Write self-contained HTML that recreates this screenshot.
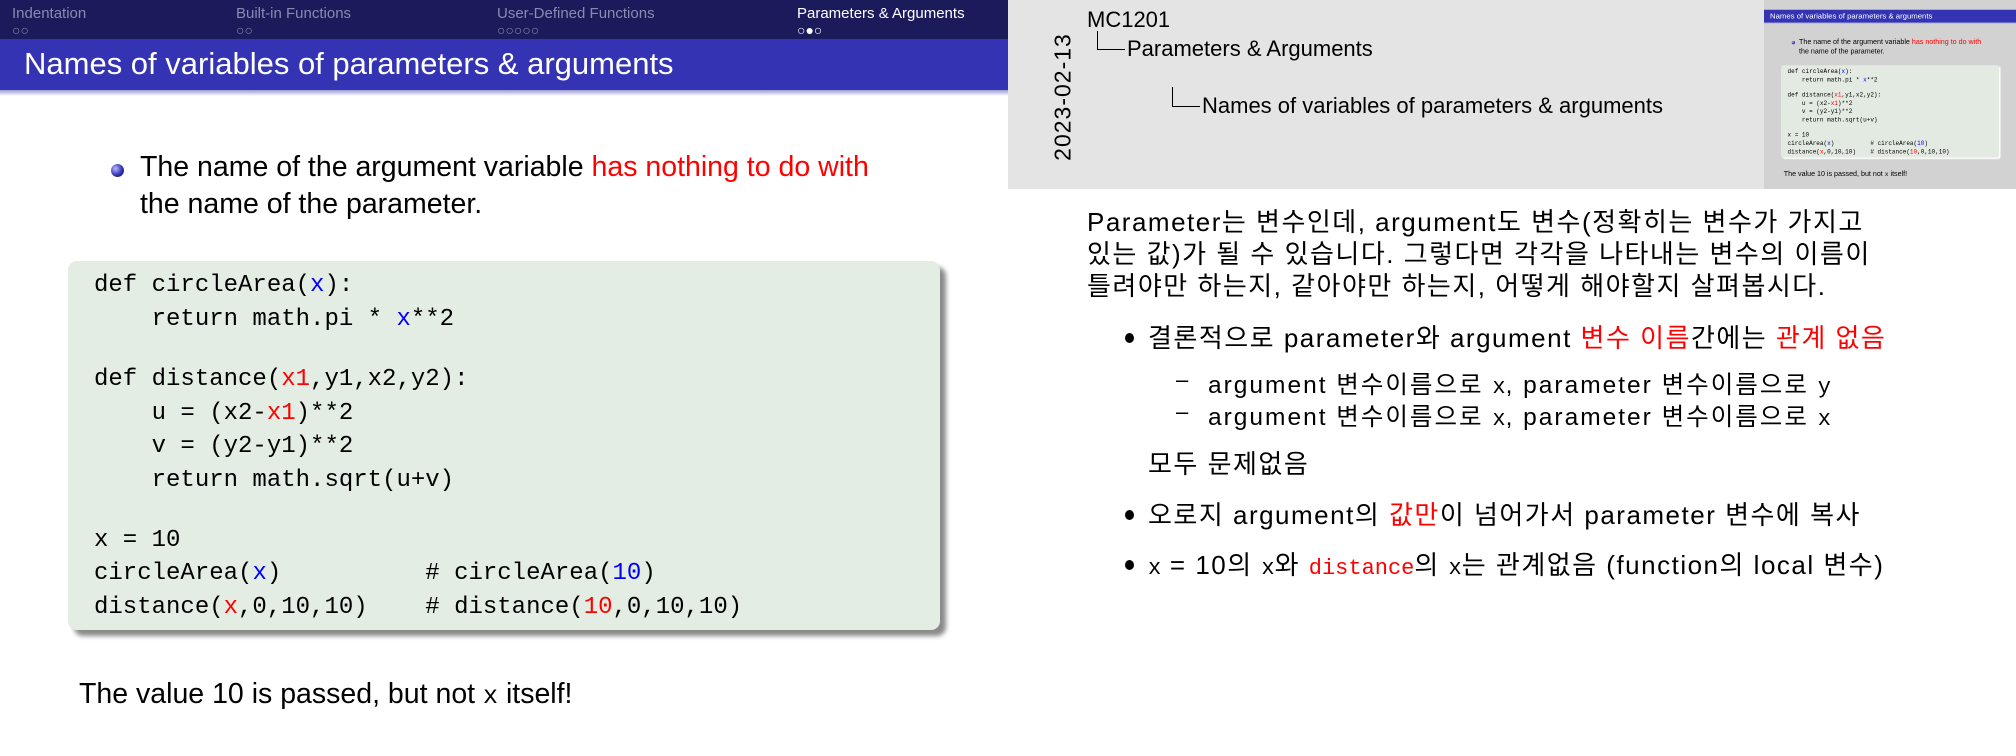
<!DOCTYPE html>
<html><head><meta charset="utf-8">
<style>
*{margin:0;padding:0;box-sizing:border-box}
body{width:2016px;height:756px;position:relative;overflow:hidden;background:#fff;font-family:"Liberation Sans","Noto Sans CJK KR",sans-serif;color:#000}
.abs{position:absolute;white-space:nowrap}
.slide{position:absolute;width:1008px;height:756px;overflow:hidden;background:#fff}
.nav{position:absolute;left:0;top:0;width:1008px;height:39px;background:#1b1b5c}
.nav .it{position:absolute;top:5px;font-size:15px;color:#8a8ab0}
.nav .it.cur{color:#fff}
.nav .dots{position:absolute;top:23px;font-size:14px;letter-spacing:0;color:#8a8ab0;line-height:14px}
.nav .dots.cur{color:#fff}
.tband{position:absolute;left:0;top:39px;width:1008px;height:51px;background:#3333b3}
.tshadow{position:absolute;left:0;top:90px;width:1008px;height:6px;background:linear-gradient(#9a9ad6,#fff)}
.title{position:absolute;left:24px;top:46px;font-size:31px;color:#fff;white-space:nowrap}
.ball{position:absolute;left:111px;top:164px;width:13px;height:13px;border-radius:50%;background:radial-gradient(circle at 35% 35%,#b8b8ff,#3333b3 55%,#101050)}
.btxt{position:absolute;left:140px;font-size:28.5px;white-space:nowrap}
.red{color:#f00}.blue{color:#00f}
.code{position:absolute;left:68px;top:261px;width:872px;height:369px;background:#e4ede4;border-radius:9px;box-shadow:6px 6px 5px #8a8a8a}
.cl{position:absolute;left:26px;font-family:"Liberation Mono",monospace;font-size:24px;white-space:pre}
.bottom{position:absolute;left:79px;top:678px;font-size:28.5px;white-space:nowrap}
.thumb{left:1764px;top:0;transform:scale(.25);transform-origin:0 0;height:756px;background:#d2d2d2}
.thumb .nav{background:#d2d2d2}.thumb .nav *{display:none}
.thumb .tshadow{background:linear-gradient(#9a9ad6,#d2d2d2)}
.thumb .code{background:#e2eae2;box-shadow:6px 6px 5px #fff}
.k{font-size:26px;letter-spacing:1.5px}
.s{font-size:24.5px;letter-spacing:2px}
.m{font-family:"Liberation Mono",monospace;font-size:22px;letter-spacing:0}
.dot{position:absolute;left:1125px;width:9px;height:10px;border-radius:50%;background:#000}
</style></head><body>

<div class="slide" style="left:0;top:0">
 <div class="nav">
  <div class="it" style="left:12px">Indentation</div><div class="dots" style="left:12px">○○</div>
  <div class="it" style="left:236px">Built-in Functions</div><div class="dots" style="left:236px">○○</div>
  <div class="it" style="left:497px">User-Defined Functions</div><div class="dots" style="left:497px">○○○○○</div>
  <div class="it cur" style="left:797px">Parameters &amp; Arguments</div><div class="dots cur" style="left:797px">○●○</div>
 </div>
 <div class="tband"></div><div class="tshadow"></div>
 <div class="title">Names of variables of parameters &amp; arguments</div>
 <div class="ball"></div>
 <div class="btxt" style="top:151px">The name of the argument variable <span class="red">has nothing to do with</span></div>
 <div class="btxt" style="top:188px">the name of the parameter.</div>
 <div class="code">
  <div class="cl" style="top:11px">def circleArea(<span class="blue">x</span>):</div>
  <div class="cl" style="top:45px">    return math.pi * <span class="blue">x</span>**2</div>
  <div class="cl" style="top:105px">def distance(<span class="red">x1</span>,y1,x2,y2):</div>
  <div class="cl" style="top:139px">    u = (x2-<span class="red">x1</span>)**2</div>
  <div class="cl" style="top:172px">    v = (y2-y1)**2</div>
  <div class="cl" style="top:206px">    return math.sqrt(u+v)</div>
  <div class="cl" style="top:266px">x = 10</div>
  <div class="cl" style="top:299px">circleArea(<span class="blue">x</span>)          # circleArea(<span class="blue">10</span>)</div>
  <div class="cl" style="top:333px">distance(<span class="red">x</span>,0,10,10)    # distance(<span class="red">10</span>,0,10,10)</div>
 </div>
 <div class="bottom">The value 10 is passed, but not <span style="font-family:'Liberation Mono',monospace;font-size:25px">x</span> itself!</div>
</div>

<div class="abs" style="left:1008px;top:0;width:756px;height:189px;background:#e4e4e4"></div>

<div class="slide thumb">
 <div class="nav"></div>
 <div class="tband"></div><div class="tshadow"></div>
 <div class="title">Names of variables of parameters &amp; arguments</div>
 <div class="ball"></div>
 <div class="btxt" style="top:151px">The name of the argument variable <span class="red">has nothing to do with</span></div>
 <div class="btxt" style="top:188px">the name of the parameter.</div>
 <div class="code">
  <div class="cl" style="top:11px">def circleArea(<span class="blue">x</span>):</div>
  <div class="cl" style="top:45px">    return math.pi * <span class="blue">x</span>**2</div>
  <div class="cl" style="top:105px">def distance(<span class="red">x1</span>,y1,x2,y2):</div>
  <div class="cl" style="top:139px">    u = (x2-<span class="red">x1</span>)**2</div>
  <div class="cl" style="top:172px">    v = (y2-y1)**2</div>
  <div class="cl" style="top:206px">    return math.sqrt(u+v)</div>
  <div class="cl" style="top:266px">x = 10</div>
  <div class="cl" style="top:299px">circleArea(<span class="blue">x</span>)          # circleArea(<span class="blue">10</span>)</div>
  <div class="cl" style="top:333px">distance(<span class="red">x</span>,0,10,10)    # distance(<span class="red">10</span>,0,10,10)</div>
 </div>
 <div class="bottom">The value 10 is passed, but not <span style="font-family:'Liberation Mono',monospace;font-size:25px">x</span> itself!</div>
</div>

<div class="abs" style="left:1087px;top:7px;font-size:22px">MC1201</div>
<div class="abs" style="left:1097px;top:31px;width:1px;height:19px;background:#000"></div>
<div class="abs" style="left:1097px;top:49px;width:28px;height:1px;background:#000"></div>
<div class="abs" style="left:1127px;top:36px;font-size:22px">Parameters &amp; Arguments</div>
<div class="abs" style="left:1172px;top:87px;width:1px;height:20px;background:#000"></div>
<div class="abs" style="left:1172px;top:106px;width:28px;height:1px;background:#000"></div>
<div class="abs" style="left:1202px;top:93px;font-size:22px">Names of variables of parameters &amp; arguments</div>
<div class="abs" style="left:1063px;top:97px;font-size:23px;letter-spacing:1px;transform:translate(-50%,-50%) rotate(-90deg)">2023-02-13</div>

<div class="abs k" style="left:1087px;top:202px">Parameter는 변수인데, argument도 변수(정확히는 변수가 가지고</div>
<div class="abs k" style="left:1087px;top:234px">있는 값)가 될 수 있습니다. 그렇다면 각각을 나타내는 변수의 이름이</div>
<div class="abs k" style="left:1087px;top:266px">틀려야만 하는지, 같아야만 하는지, 어떻게 해야할지 살펴봅시다.</div>

<div class="dot" style="top:333px"></div>
<div class="abs k" style="left:1148px;top:318px">결론적으로 parameter와 argument <span class="red">변수 이름</span>간에는 <span class="red">관계 없음</span></div>
<div class="abs" style="left:1176px;top:367px;font-size:22px">–</div>
<div class="abs s" style="left:1208px;top:366px">argument 변수이름으로 <span class="m">x</span>, parameter 변수이름으로 <span class="m">y</span></div>
<div class="abs" style="left:1176px;top:399px;font-size:22px">–</div>
<div class="abs s" style="left:1208px;top:398px">argument 변수이름으로 <span class="m">x</span>, parameter 변수이름으로 <span class="m">x</span></div>
<div class="abs k" style="left:1148px;top:444px">모두 문제없음</div>
<div class="dot" style="top:510px"></div>
<div class="abs k" style="left:1148px;top:495px">오로지 argument의 <span class="red">값만</span>이 넘어가서 parameter 변수에 복사</div>
<div class="dot" style="top:560px"></div>
<div class="abs k" style="left:1148px;top:545px"><span class="m">x</span> = 10의 <span class="m">x</span>와 <span class="m red">distance</span>의 <span class="m">x</span>는 관계없음 (function의 local 변수)</div>

</body></html>
